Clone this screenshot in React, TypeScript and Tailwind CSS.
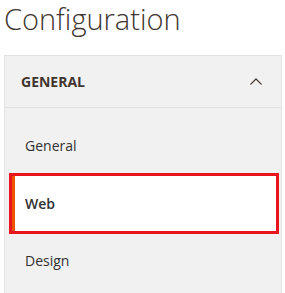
function ChevronUp() {
  return (
    <svg width="12" height="7" viewBox="0 0 12 7" fill="none">
      <polyline
        points="0.8,6.2 6,1 11.2,6.2"
        stroke="#41362f"
        strokeWidth="1.2"
        strokeLinecap="round"
        strokeLinejoin="round"
      />
    </svg>
  );
}

export default function App() {
  const font = { fontFamily: '"Open Sans", "Liberation Sans", sans-serif' };
  return (
    <div className="w-[285px] h-[293px] overflow-hidden bg-white" style={font}>
      <h1 className="pl-[4px] h-[55px] text-[29px] leading-[38px] font-light text-[#41362f]">
        Configuration
      </h1>
      <div className="ml-[4px] mr-[3px] h-[240px] border border-[#e3e3e3] bg-[#f1f1f1]">
        <div className="h-[52px] flex items-center justify-between pl-[16px] pr-[19px] border-b border-[#e3e3e3]">
          <span className="text-[14px] font-bold text-[#41362f]">GENERAL</span>
          <ChevronUp />
        </div>
        <div className="pt-[9px]">
          <div className="h-[56px] flex items-center pl-[20px] text-[14px] text-[#303030]">
            General
          </div>
          <div className="ml-[4px] mr-[2px] h-[61px] border-[3px] border-[#e8141e]">
            <div className="h-full flex items-center pl-[10px] bg-white border-l-[3px] border-[#eb5202] text-[14px] font-semibold text-[#303030]">
              Web
            </div>
          </div>
          <div className="h-[52px] flex items-center pl-[20px] text-[14px] text-[#303030]">
            Design
          </div>
        </div>
      </div>
    </div>
  );
}
